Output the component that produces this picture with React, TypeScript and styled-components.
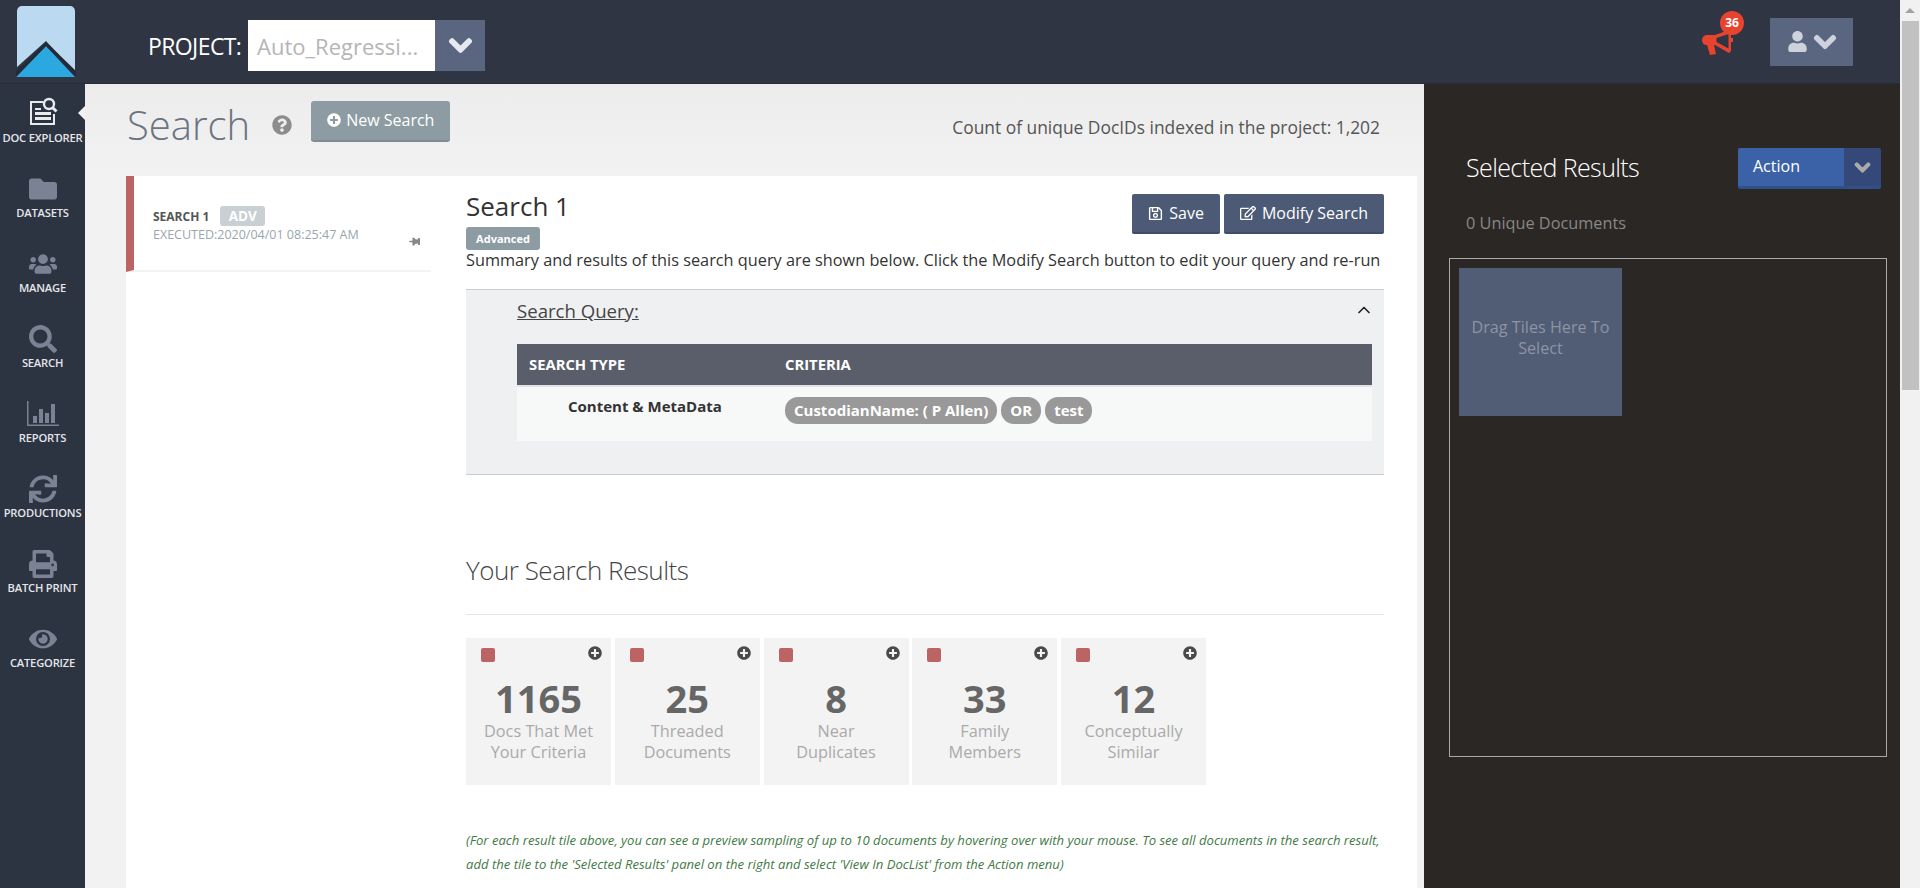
import React from 'react';
import styled, { createGlobalStyle } from 'styled-components';
import {
  FaChevronDown,
  FaEye,
  FaFolder,
  FaPlusCircle,
  FaPrint,
  FaQuestionCircle,
  FaRegEdit,
  FaRegSave,
  FaSearch,
  FaSync,
  FaThumbtack,
  FaUser,
  FaUsers,
} from 'react-icons/fa';
import { FiChevronUp } from 'react-icons/fi';

const GlobalStyle = createGlobalStyle`
  html, body {
    margin: 0;
    height: 100%;
    overflow: hidden;
    font-family: "Open Sans", "Liberation Sans", sans-serif;
  }
  * { box-sizing: border-box; }
`;

const DocExplorerIcon = () => (
  <svg width="30" height="28" viewBox="0 0 30 28" fill="none">
    <path d="M2 4h13v2H4v20h21v-9h2v11H2z" fill="#e8eaee" />
    <path d="M7 11h6v2H7zM7 15h16v3H7zM7 20h16v3H7z" fill="#e8eaee" />
    <circle cx="21" cy="7" r="5" stroke="#e8eaee" strokeWidth="2.4" />
    <path d="M24.5 10.5L28.5 14.5" stroke="#e8eaee" strokeWidth="3" />
  </svg>
);

const ReportsIcon = () => (
  <svg width="34" height="26" viewBox="0 0 34 26" fill="#7b8294">
    <path d="M1 0h1.500v23.500H33V25H1z" />
    <path d="M7 15h4v7H7zM13 8h4v14h-4zM19 12h4v10h-4zM25 3h4v19h-4z" />
  </svg>
);

const Megaphone = () => (
  <svg width="32" height="26" viewBox="0 0 32 26" fill="#e8432f">
    <path
      d="M0 10a5 5 0 0 1 5-5h8L27 0l2 1v7h2v4h-2v9l-2 2-14-8h-1l2 9-6 1-3-10C2 15 0 13 0 10zM14.500 8v4l12 6.500V4z"
      fillRule="evenodd"
    />
  </svg>
);

const Logo = () => (
  <svg width="60" height="73" viewBox="0 0 60 73">
    <path d="M1 6a5 5 0 0 1 5-5h48a5 5 0 0 1 5 5v61L30 36 1 62z" fill="#bbd9f0" />
    <path d="M0 72l30-31 29 31z" fill="#2ba8e0" />
    <path d="M0 72v-6l30-29 30 29v6L30 41z" fill="#232b39" />
  </svg>
);

const Page = styled.div`
  display: flex;
  width: 1920px;
  height: 888px;
  overflow: hidden;
  background: #f1f1f1;
`;

const Shell = styled.div`
  display: flex;
  flex-direction: column;
  width: 1900px;
  flex: none;
`;

const TopBar = styled.header`
  display: flex;
  align-items: center;
  height: 84px;
  flex: none;
  padding-left: 16px;
  background: #2f3543;
  border-bottom: 1px solid #262b37;
`;

const ProjectLabel = styled.span`
  margin: 8px 4px 0 72px;
  width: 96px;
  font-size: 23px;
  letter-spacing: -0.6px;
  color: #fff;
  white-space: nowrap;
`;

const ProjectField = styled.div`
  display: flex;
  align-items: center;
  width: 187px;
  height: 51px;
  margin-top: 8px;
  padding-left: 9px;
  background: #fff;
  font-size: 22px;
  color: #b5b5b5;
  white-space: nowrap;
`;

const ChevronBox = styled.div`
  display: flex;
  align-items: center;
  justify-content: center;
  width: 50px;
  height: 51px;
  margin-top: 8px;
  background: #5a6680;
  color: #e6e9ef;
  font-size: 25px;

  svg {
    stroke: currentColor;
    stroke-width: 40px;
  }
`;

const TopRight = styled.div`
  display: flex;
  align-items: center;
  margin-left: auto;
  margin-right: 47px;
`;

const Notify = styled.div`
  position: relative;
  width: 32px;
  height: 26px;
  margin-right: 36px;
  margin-top: 2px;
`;

const NotifyBadge = styled.span`
  position: absolute;
  left: 18px;
  top: -19px;
  width: 24px;
  height: 24px;
  border-radius: 50%;
  background: #e8432f;
  color: #fff;
  font-size: 12px;
  font-weight: 700;
  line-height: 24px;
  text-align: center;
`;

const UserButton = styled.div`
  display: flex;
  align-items: center;
  justify-content: center;
  gap: 5px;
  width: 83px;
  height: 48px;
  background: #5a6680;
  color: #cdd2dd;
  font-size: 21px;

  svg + svg {
    font-size: 24px;
    stroke: currentColor;
    stroke-width: 40px;
  }
`;

const Body = styled.div`
  display: flex;
  flex: 1;
  min-height: 0;
`;

const SideNav = styled.nav`
  width: 85px;
  flex: none;
  padding-top: 12px;
  background: #2c3341;
`;

const NavItem = styled.div<{ $active?: boolean }>`
  position: relative;
  display: flex;
  flex-direction: column;
  align-items: center;
  height: 75px;
  color: ${p => (p.$active ? '#e8eaee' : '#7b8294')};
  font-size: 28px;

  ${p =>
    p.$active &&
    `
    &::after {
      content: '';
      position: absolute;
      right: 0;
      top: 10px;
      border: 7px solid transparent;
      border-right-color: #f1f1f1;
      border-left-width: 0;
    }
  `}
`;

const NavIcon = styled.div<{ $active?: boolean }>`
  display: flex;
  align-items: center;
  justify-content: center;
  height: 30px;
  padding-top: ${p => (p.$active ? '0' : '5px')};
`;

const NavLabel = styled.span`
  margin-top: 5px;
  font-size: 11.2px;
  line-height: 14px;
  font-weight: 600;
  color: #e4e6ea;
  white-space: nowrap;
  letter-spacing: -0.2px;
`;

const Content = styled.main`
  flex: none;
  width: 1339px;
  padding: 16px 7px 0 41px;
  background: linear-gradient(#ececec, #f2f2f2 90px);
`;

const PageHeader = styled.div`
  display: flex;
  align-items: center;
  height: 76px;
  padding: 0 37px 26px 1px;
`;

const PageTitle = styled.h1`
  margin: 0 22px 0 0;
  font-size: 40px;
  line-height: 46px;
  font-weight: 300;
  color: #6b7480;
`;

const HelpIcon = styled(FaQuestionCircle)`
  font-size: 20px;
  color: #8c8c8c;
`;

const NewSearchButton = styled.div`
  display: flex;
  align-items: center;
  gap: 5px;
  height: 41px;
  margin: -8px 0 0 19px;
  padding: 0 16px;
  border-radius: 3px;
  border-bottom: 2px solid #7f8d93;
  background: #8d9ca2;
  color: #fff;
  font-size: 16px;
`;

const CountText = styled.div`
  margin-left: auto;
  padding-top: 3px;
  font-size: 17.4px;
  color: #555;
`;

const Card = styled.div`
  display: flex;
  height: 712px;
  background: #fff;
`;

const ListColumn = styled.div`
  width: 305px;
  flex: none;
`;

const ListItem = styled.div`
  position: relative;
  height: 96px;
  padding: 30px 0 0 19px;
  border-left: 8px solid #bc6363;
  border-bottom: 2px solid #f3f3f3;
`;

const ListTitle = styled.div`
  display: flex;
  align-items: center;
  gap: 11px;
  font-size: 12px;
  font-weight: 700;
  color: #555;
`;

const AdvBadge = styled.span`
  width: 45px;
  height: 20px;
  border-radius: 3px;
  background: #c9d0d3;
  color: #fff;
  font-size: 13.5px;
  font-weight: 700;
  line-height: 20px;
  text-align: center;
`;

const Executed = styled.div`
  margin-top: 1px;
  font-size: 12.5px;
  line-height: 16px;
  color: #9aa5ae;
  white-space: nowrap;
`;

const PinIcon = styled(FaThumbtack)`
  position: absolute;
  right: 11px;
  top: 60px;
  font-size: 11px;
  color: #888;
  transform: rotate(90deg);
`;

const MainColumn = styled.div`
  width: 918px;
  margin-left: 35px;
`;

const TitleRow = styled.div`
  display: flex;
  justify-content: space-between;
  padding-top: 18px;
`;

const SearchHeading = styled.h2`
  margin: 0;
  font-size: 26px;
  line-height: 24px;
  font-weight: 400;
  color: #333;
`;

const ButtonGroup = styled.div`
  display: flex;
  gap: 4px;
`;

const DarkButton = styled.div`
  display: flex;
  align-items: center;
  gap: 6px;
  height: 40px;
  padding: 0 16px;
  border-radius: 2px;
  border-bottom: 2px solid #3f4d6b;
  background: #4d5a75;
  color: #fff;
  font-size: 16px;
`;

const AdvancedTag = styled.span`
  display: block;
  width: 74px;
  height: 23px;
  margin-top: -7px;
  border-radius: 3px;
  background: #8d9ca2;
  color: #fff;
  font-size: 11px;
  font-weight: 700;
  line-height: 23px;
  text-align: center;
`;

const Summary = styled.p`
  margin: 0;
  height: 39px;
  font-size: 16.3px;
  line-height: 20px;
  color: #333;
  white-space: nowrap;
`;

const QueryPanel = styled.section`
  height: 186px;
  padding: 0 12px 0 51px;
  background: #eff0f2;
  border-top: 1px solid #ccc;
  border-bottom: 1px solid #ccc;
`;

const QueryHead = styled.div`
  display: flex;
  align-items: center;
  justify-content: space-between;
  height: 54px;
  padding-bottom: 14px;
`;

const QueryTitle = styled.span`
  font-size: 18.6px;
  color: #444;
  text-decoration: underline;
`;

const CollapseIcon = styled(FiChevronUp)`
  font-size: 20px;
  color: #222;
  margin-right: -2px;
`;

const QueryTable = styled.div`
  display: grid;
  grid-template-columns: 268px 1fr;
`;

const TableHead = styled.div<{ $first?: boolean }>`
  height: 41px;
  padding-left: ${p => (p.$first ? '12px' : '0')};
  background: #5a5e6b;
  color: #fff;
  font-size: 14.8px;
  font-weight: 700;
  line-height: 41px;
`;

const TableCell = styled.div<{ $first?: boolean }>`
  display: flex;
  align-items: flex-start;
  gap: 4px;
  height: 56px;
  padding: ${p => (p.$first ? '9px 0 0 51px' : '10px 0 0')};
  background: #f7f8f8;
  border-top: 2px solid #e2e3e6;
  font-size: 15px;
  font-weight: 700;
  color: #333;
`;

const Chip = styled.span`
  height: 27px;
  padding: 0 9px;
  border-radius: 13px;
  background: #999;
  color: #fff;
  font-size: 15px;
  font-weight: 700;
  line-height: 27px;
`;

const ResultsTitle = styled.h3`
  margin: 0;
  padding-top: 77px;
  height: 140px;
  border-bottom: 1px solid #e6e6e6;
  font-size: 26px;
  line-height: 36px;
  font-weight: 300;
  letter-spacing: -0.5px;
  color: #444;
`;

const TileRow = styled.div`
  display: flex;
  gap: 3.75px;
  margin-top: 23px;
`;

const Tile = styled.div`
  position: relative;
  width: 145px;
  height: 147px;
  padding-top: 37px;
  background: #f3f3f3;
  text-align: center;
`;

const TileCheck = styled.span`
  position: absolute;
  left: 15px;
  top: 10px;
  width: 14px;
  height: 14px;
  border-radius: 2px;
  background: #bc6363;
`;

const TilePlus = styled(FaPlusCircle)`
  position: absolute;
  right: 9px;
  top: 8px;
  font-size: 14px;
  color: #4a4a4a;
`;

const TileCount = styled.div`
  font-size: 38px;
  line-height: 46px;
  font-weight: 700;
  color: #666;
`;

const TileLabel = styled.div`
  font-size: 16.3px;
  line-height: 21px;
  color: #aaa;
  white-space: nowrap;
`;

const Note = styled.p`
  margin: 43px 0 0;
  font-size: 13.1px;
  line-height: 24px;
  font-style: italic;
  color: #3f7a46;
  white-space: nowrap;
`;

const SelectedPanel = styled.aside`
  flex: none;
  width: 476px;
  padding: 64px 12px 0 25px;
  background: #2b2725;
`;

const SelectedHead = styled.div`
  display: flex;
  align-items: center;
  justify-content: space-between;
  height: 41px;
  padding-left: 17px;
  padding-right: 7px;
`;

const SelectedTitle = styled.h3`
  margin: -4px 0 0;
  font-size: 25px;
  font-weight: 300;
  letter-spacing: -0.6px;
  color: #fff;
`;

const ActionSplit = styled.div`
  display: flex;
  width: 143px;
  height: 41px;
  border-radius: 2px;
  overflow: hidden;
  border-bottom: 3px solid #2f5088;
`;

const ActionLabel = styled.div`
  flex: 1;
  padding-left: 15px;
  background: #3b62a6;
  color: #fff;
  font-size: 16px;
  line-height: 37px;
`;

const ActionCaret = styled.div`
  display: flex;
  align-items: center;
  justify-content: center;
  width: 37px;
  background: #34497a;
  color: #aaa;
  font-size: 17px;

  svg {
    stroke: currentColor;
    stroke-width: 40px;
  }
`;

const UniqueDocs = styled.div`
  height: 69px;
  padding: 22px 0 0 17px;
  font-size: 16.3px;
  line-height: 24px;
  color: #888;
`;

const DropZone = styled.div`
  width: 438px;
  height: 499px;
  padding: 9px;
  border: 1px solid #aaa;
`;

const DropTile = styled.div`
  width: 163px;
  height: 148px;
  padding: 49px 8px 0;
  background: #515c75;
  color: #8c94a6;
  font-size: 16.2px;
  line-height: 21px;
  text-align: center;
`;

const ScrollTrack = styled.div`
  display: flex;
  flex-direction: column;
  align-items: center;
  flex: 1;
  padding-top: 8px;
  background: #f1f1f1;
`;

const ScrollArrow = styled.span`
  width: 0;
  height: 0;
  border: 5px solid transparent;
  border-top-width: 0;
  border-bottom: 5px solid #a3a3a3;
`;

const ScrollThumb = styled.div`
  width: 17px;
  height: 369px;
  margin-top: 8px;
  background: #c1c1c1;
`;

const navItems = [
  { label: 'DOC EXPLORER', icon: <DocExplorerIcon />, active: true },
  { label: 'DATASETS', icon: <FaFolder /> },
  { label: 'MANAGE', icon: <FaUsers /> },
  { label: 'SEARCH', icon: <FaSearch /> },
  { label: 'REPORTS', icon: <ReportsIcon /> },
  { label: 'PRODUCTIONS', icon: <FaSync /> },
  { label: 'BATCH PRINT', icon: <FaPrint /> },
  { label: 'CATEGORIZE', icon: <FaEye /> },
];

const tiles = [
  { count: 1165, lines: ['Docs That Met', 'Your Criteria'] },
  { count: 25, lines: ['Threaded', 'Documents'] },
  { count: 8, lines: ['Near', 'Duplicates'] },
  { count: 33, lines: ['Family', 'Members'] },
  { count: 12, lines: ['Conceptually', 'Similar'] },
];

const App: React.FC = () => (
  <Page>
    <GlobalStyle />
    <Shell>
      <TopBar>
        <Logo />
        <ProjectLabel>PROJECT:</ProjectLabel>
        <ProjectField>Auto_Regressi...</ProjectField>
        <ChevronBox>
          <FaChevronDown />
        </ChevronBox>
        <TopRight>
          <Notify>
            <Megaphone />
            <NotifyBadge>36</NotifyBadge>
          </Notify>
          <UserButton>
            <FaUser />
            <FaChevronDown />
          </UserButton>
        </TopRight>
      </TopBar>
      <Body>
        <SideNav>
          {navItems.map(item => (
            <NavItem key={item.label} $active={item.active}>
              <NavIcon $active={item.active}>{item.icon}</NavIcon>
              <NavLabel>{item.label}</NavLabel>
            </NavItem>
          ))}
        </SideNav>
        <Content>
          <PageHeader>
            <PageTitle>Search</PageTitle>
            <HelpIcon />
            <NewSearchButton>
              <FaPlusCircle size={14} />
              New Search
            </NewSearchButton>
            <CountText>Count of unique DocIDs indexed in the project: 1,202</CountText>
          </PageHeader>
          <Card>
            <ListColumn>
              <ListItem>
                <ListTitle>
                  SEARCH 1<AdvBadge>ADV</AdvBadge>
                </ListTitle>
                <Executed>EXECUTED:2020/04/01 08:25:47 AM</Executed>
                <PinIcon />
              </ListItem>
            </ListColumn>
            <MainColumn>
              <TitleRow>
                <SearchHeading>Search 1</SearchHeading>
                <ButtonGroup>
                  <DarkButton>
                    <FaRegSave size={15} />
                    Save
                  </DarkButton>
                  <DarkButton>
                    <FaRegEdit size={16} />
                    Modify Search
                  </DarkButton>
                </ButtonGroup>
              </TitleRow>
              <AdvancedTag>Advanced</AdvancedTag>
              <Summary>
                Summary and results of this search query are shown below. Click the Modify Search button to edit your query and re-run
              </Summary>
              <QueryPanel>
                <QueryHead>
                  <QueryTitle>Search Query:</QueryTitle>
                  <CollapseIcon />
                </QueryHead>
                <QueryTable>
                  <TableHead $first>SEARCH TYPE</TableHead>
                  <TableHead>CRITERIA</TableHead>
                  <TableCell $first>Content &amp; MetaData</TableCell>
                  <TableCell>
                    <Chip>CustodianName: ( P Allen)</Chip>
                    <Chip>OR</Chip>
                    <Chip>test</Chip>
                  </TableCell>
                </QueryTable>
              </QueryPanel>
              <ResultsTitle>Your Search Results</ResultsTitle>
              <TileRow>
                {tiles.map(tile => (
                  <Tile key={tile.count}>
                    <TileCheck />
                    <TilePlus />
                    <TileCount>{tile.count}</TileCount>
                    {tile.lines.map(line => (
                      <TileLabel key={line}>{line}</TileLabel>
                    ))}
                  </Tile>
                ))}
              </TileRow>
              <Note>
                (For each result tile above, you can see a preview sampling of up to 10 documents by hovering over with your mouse. To see all documents in the search result,
                <br />
                add the tile to the 'Selected Results' panel on the right and select 'View In DocList' from the Action menu)
              </Note>
            </MainColumn>
          </Card>
        </Content>
        <SelectedPanel>
          <SelectedHead>
            <SelectedTitle>Selected Results</SelectedTitle>
            <ActionSplit>
              <ActionLabel>Action</ActionLabel>
              <ActionCaret>
                <FaChevronDown />
              </ActionCaret>
            </ActionSplit>
          </SelectedHead>
          <UniqueDocs>0 Unique Documents</UniqueDocs>
          <DropZone>
            <DropTile>Drag Tiles Here To Select</DropTile>
          </DropZone>
        </SelectedPanel>
      </Body>
    </Shell>
    <ScrollTrack>
      <ScrollArrow />
      <ScrollThumb />
    </ScrollTrack>
  </Page>
);

export default App;
